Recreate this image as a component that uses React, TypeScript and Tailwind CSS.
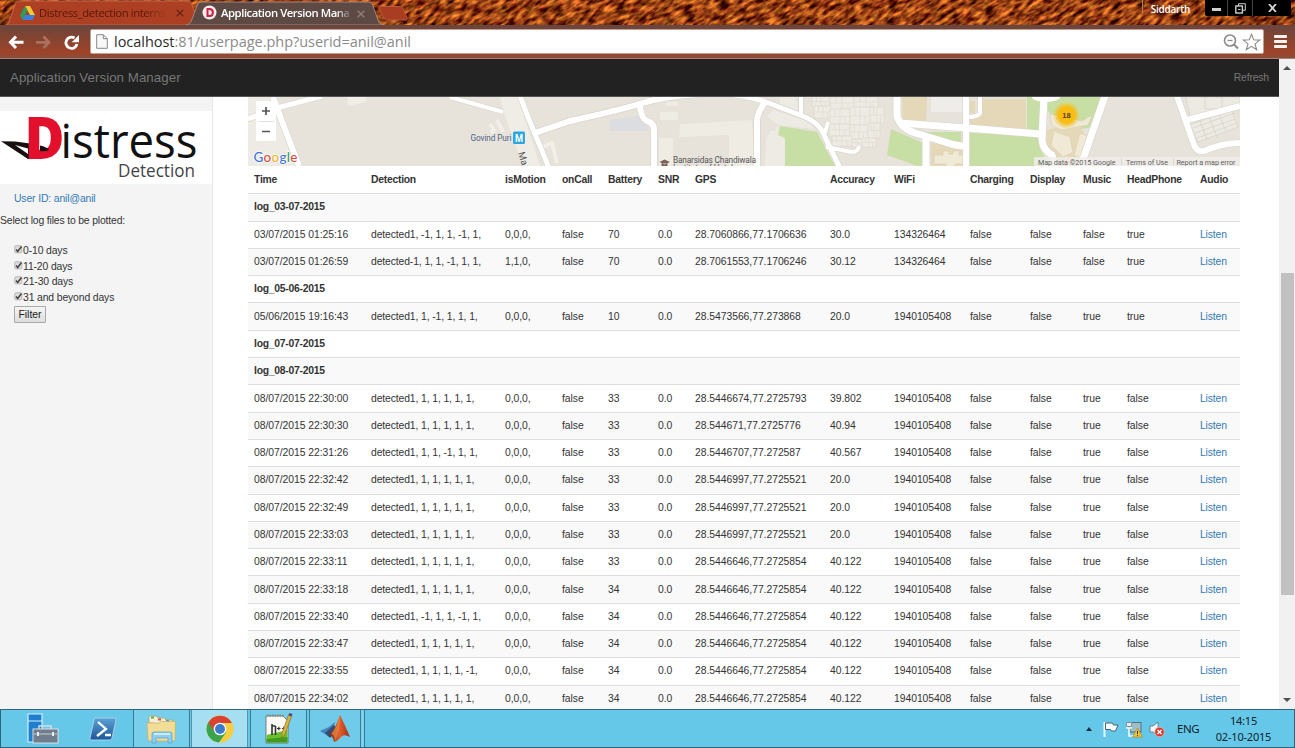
import React from "react";

const COLS =
  "grid grid-cols-[117px_134px_57px_46px_50px_37px_135px_64px_76px_60px_53px_44px_73px_40px] pl-[6px] items-center";

const HEADERS = [
  "Time", "Detection", "isMotion", "onCall", "Battery", "SNR", "GPS",
  "Accuracy", "WiFi", "Charging", "Display", "Music", "HeadPhone", "Audio",
];

type Row = string | string[];

const late = (time: string, det: string, bat: string, gps: string, acc: string): string[] => [
  `08/07/2015 ${time}`, det, "0,0,0,", "false", bat, "0.0", gps, acc,
  "1940105408", "false", "false", "true", "false",
];

const ONES = "detected1, 1, 1, 1, 1, 1,";

const ROWS: Row[] = [
  "log_03-07-2015",
  ["03/07/2015 01:25:16", "detected1, -1, 1, 1, -1, 1,", "0,0,0,", "false", "70", "0.0", "28.7060866,77.1706636", "30.0", "134326464", "false", "false", "false", "true"],
  ["03/07/2015 01:26:59", "detected-1, 1, 1, -1, 1, 1,", "1,1,0,", "false", "70", "0.0", "28.7061553,77.1706246", "30.12", "134326464", "false", "false", "false", "true"],
  "log_05-06-2015",
  ["05/06/2015 19:16:43", "detected1, 1, -1, 1, 1, 1,", "0,0,0,", "false", "10", "0.0", "28.5473566,77.273868", "20.0", "1940105408", "false", "false", "true", "true"],
  "log_07-07-2015",
  "log_08-07-2015",
  late("22:30:00", ONES, "33", "28.5446674,77.2725793", "39.802"),
  late("22:30:30", ONES, "33", "28.544671,77.2725776", "40.94"),
  late("22:31:26", "detected1, 1, 1, -1, 1, 1,", "33", "28.5446707,77.272587", "40.567"),
  late("22:32:42", ONES, "33", "28.5446997,77.2725521", "20.0"),
  late("22:32:49", ONES, "33", "28.5446997,77.2725521", "20.0"),
  late("22:33:03", ONES, "33", "28.5446997,77.2725521", "20.0"),
  late("22:33:11", ONES, "33", "28.5446646,77.2725854", "40.122"),
  late("22:33:18", ONES, "34", "28.5446646,77.2725854", "40.122"),
  late("22:33:40", "detected1, -1, 1, 1, -1, 1,", "34", "28.5446646,77.2725854", "40.122"),
  late("22:33:47", ONES, "34", "28.5446646,77.2725854", "40.122"),
  late("22:33:55", "detected1, 1, 1, 1, 1, -1,", "34", "28.5446646,77.2725854", "40.122"),
  late("22:34:02", ONES, "34", "28.5446646,77.2725854", "40.122"),
];

function Knit() {
  return (
    <svg className="absolute inset-0 h-full w-full" aria-hidden="true">
      <defs>
        <filter id="knit" x="0" y="0" width="100%" height="100%" colorInterpolationFilters="sRGB">
          <feTurbulence type="fractalNoise" baseFrequency="0.09 0.26" numOctaves="3" seed="8" />
          <feColorMatrix values="1.6 0 0 0 -0.22  1.1 0.2 0 0 -0.4  0.4 0 0 0 -0.12  0 0 0 0 1" />
        </filter>
      </defs>
      <g transform="rotate(-32 650 12)">
        <rect x="-60" y="-420" width="1420" height="860" filter="url(#knit)" />
      </g>
    </svg>
  );
}

function DriveIcon() {
  return (
    <svg width="15" height="14" viewBox="0 0 15 14">
      <path d="M5 0h5l5 9h-5z" fill="#f4c63a" />
      <path d="M5 0l2.5 4.5L2.5 14 0 9z" fill="#2f9c5a" />
      <path d="M5 9h10l-2.5 5h-10z" fill="#3c7fe0" />
    </svg>
  );
}

function TabStrip() {
  return (
    <div className="relative h-[25px] overflow-hidden bg-[#8a3a14]">
      <Knit />
      <svg className="absolute left-0 top-0" width="420" height="25" viewBox="0 0 420 25">
        <path d="M6 25c3-1 3-3 4-6l5-14c1-3 2-4 4-4h168c3 0 4 1 5 4l7 18v2z" fill="#ad3f22" stroke="#c2684c" strokeWidth="1" />
        <path d="M186 25c4-1 5-3 6-6l5-13c1-3 2-4 5-4h166c3 0 4 1 5 4l5 14c1 3 2 4 5 5z" fill="#5d4a45" stroke="#a7857b" strokeWidth="1" />
        <path d="M379 8c0-1 0-1.500 1.500-1.500h20c1.500 0 2 .5 2.500 2l4 9c.5 1.500 0 2.500-1.500 2.500h-18c-2 0-3-.5-3.500-2z" fill="#a93d22" stroke="#b9583c" strokeWidth="1" />
      </svg>
      <div className="relative flex h-full items-start pl-[20px] font-['Open_Sans',sans-serif] text-[11.5px] leading-[25px]">
        <div className="mt-[6px] w-[19px]"><DriveIcon /></div>
        <div className="w-[129px] whitespace-nowrap text-[11.300px] tracking-[-0.420px] text-[#5a160b] [mask-image:linear-gradient(90deg,#000_82%,transparent)]">Distress_detection interns</div>
        <div className="ml-[8px] mt-[9px]"><Cross color="#6f2718" /></div>
        <div className="ml-[18px] mt-[5px]">
          <svg width="15" height="15" viewBox="0 0 15 15">
            <circle cx="7.500" cy="7.500" r="7" fill="#f7ecee" />
            <path d="M5.500 4h2c4.500 0 4.500 7 0 7h-2z" fill="none" stroke="#cb2345" strokeWidth="2" />
          </svg>
        </div>
        <div className="ml-[4px] w-[131px] whitespace-nowrap text-[11.300px] font-semibold tracking-[-0.450px] text-white [mask-image:linear-gradient(90deg,#000_88%,transparent)]">Application Version Mana</div>
        <div className="ml-[5px] mt-[10px]"><Cross color="#8d7c77" /></div>
        <div className="ml-auto flex h-[16px]">
          <div className="h-[14px] border-l border-[#b77b58] pl-[8px] pr-[15px] text-[10px] font-semibold leading-[18px] tracking-[-0.250px] text-white">Siddarth</div>
          <div className="mr-[4px] flex h-[16px] w-[86px] rounded-b-[2px] bg-black">
            <div className="flex w-[23px] items-center justify-center border-r border-[#444]"><span className="mt-[3px] h-[3px] w-[9px] bg-[#d0d0d0]" /></div>
            <div className="flex w-[25px] items-center justify-center border-r border-[#444]">
              <svg width="11" height="11" viewBox="0 0 11 11" fill="none" stroke="#ccc"><path d="M3.500 3V.7h6.800v6.600H8" /><rect x=".8" y="3" width="6.600" height="7" strokeWidth="1.400" /><path d="M3 6.500h2.500" /></svg>
            </div>
            <div className="flex flex-1 items-center justify-center">
              <svg width="9" height="8" viewBox="0 0 9 8" stroke="#d8d8d8" strokeWidth="1.800"><path d="M1 0l7 8M8 0L1 8" /></svg>
            </div>
          </div>
        </div>
      </div>
    </div>
  );
}

function Cross({ color }: { color: string }) {
  return (
    <svg width="8" height="8" viewBox="0 0 8 8" stroke={color} strokeWidth="1.500"><path d="M.7.7l6.600 6.600M7.300.7L.7 7.300" /></svg>
  );
}

function Toolbar() {
  return (
    <div className="flex h-[34px] items-start border-b border-[#b9796a] bg-[linear-gradient(180deg,#66473f_0%,#7b4435_25%,#9f4328_85%,#86503f_100%)] pt-[4px]">
      <svg className="ml-[8px] mt-[5px]" width="74" height="17" viewBox="0 0 74 17" fill="none">
        <path d="M8 2.500L2.500 8.300 8 14M3 8.300h12.500" stroke="#fff" strokeWidth="3" />
        <path d="M35.500 2.500l5.500 5.800-5.500 5.700M28 8.300h12.500" stroke="#a9705c" strokeWidth="2.800" />
        <path d="M66.500 4A5.600 5.600 0 1 0 69 10" stroke="#fff" strokeWidth="2.800" />
        <path d="M71 1v7.300h-7.300z" fill="#fff" />
      </svg>
      <div className="ml-[8px] flex h-[25px] w-[1174px] items-center rounded-[2px] border border-[#c39f94] bg-white">
        <svg className="ml-[5px]" width="12" height="15" viewBox="0 0 12 15"><path d="M.7.7h6.600l4 4v9.600H.7z" fill="#f8f8f8" stroke="#888" /><path d="M7.300.7v4h4" fill="none" stroke="#888" /></svg>
        <div className="ml-[6px] whitespace-nowrap font-['Open_Sans',sans-serif] text-[14.500px] leading-[22px] tracking-[-0.030px] text-[#8a8a8a]"><span className="text-[#2a2a2a]">localhost</span>:81/userpage.php?userid=anil@anil</div>
        <svg className="ml-auto mr-[2px]" width="38" height="18" viewBox="0 0 38 18" fill="none" stroke="#8b8b8b">
          <circle cx="7" cy="7.500" r="5.500" strokeWidth="1.600" /><path d="M4.500 7.500h5" strokeWidth="1.300" /><path d="M11 11.500l4 4" strokeWidth="2.200" />
          <path d="M28.500 1.300l2.200 5.500 6 .3-4.700 3.800 1.700 5.900-5.200-3.400-5.200 3.400 1.700-5.900-4.700-3.800 6-.3z" strokeWidth="1.100" />
        </svg>
      </div>
      <div className="ml-[10px] mt-[6px] flex flex-col gap-[2px]">
        <div className="h-[3px] w-[13px] rounded-[1px] bg-[#fdf3ee]" />
        <div className="h-[3px] w-[13px] rounded-[1px] bg-[#fdf3ee]" />
        <div className="h-[3px] w-[13px] rounded-[1px] bg-[#fdf3ee]" />
      </div>
    </div>
  );
}

function Logo() {
  return (
    <svg className="mt-[14px] block bg-white" width="212" height="73" viewBox="0 111 212 73">
      <path fillRule="evenodd" d="M1 141.300l14 .2 15 2v15.500h-2zM15 145l13 9v-5.500z" fill="#17100f" />
      <text x="24.500" y="158.800" fill="#e3102d" textLength="40" lengthAdjust="spacingAndGlyphs" className="font-['Open_Sans',sans-serif] text-[59px] font-extrabold">D</text>
      <path d="M40 145.500q7 1.500 9 4.500-4 2-9 1z" fill="#17100f" />
      <text x="60.500" y="158" fill="#111" textLength="137" lengthAdjust="spacingAndGlyphs" className="font-['Open_Sans',sans-serif] text-[47px]">istress</text>
      <text x="118" y="176.500" fill="#444" textLength="77" lengthAdjust="spacingAndGlyphs" className="font-['Open_Sans',sans-serif] text-[17.500px]">Detection</text>
    </svg>
  );
}

function Sidebar() {
  const groups = ["0-10 days", "11-20 days", "21-30 days", "31 and beyond days"];
  return (
    <div className="h-full w-[213px] shrink-0 border-r border-[#e8e8e8] bg-[#f4f4f4] text-[10.400px] text-[#333]">
      <Logo />
      <div className="pl-[14px] pt-[7px] leading-[16px] tracking-[-0.130px] text-[#337ab7]">User ID: anil@anil</div>
      <div className="mt-[6px] leading-[15px] tracking-[-0.160px]">Select log files to be plotted:</div>
      <div className="mt-[15px] pl-[14px]">
        {groups.map((g) => (
          <div key={g} className="flex h-[15.600px] items-center tracking-[-0.130px]">
            <svg className="mb-[2px]" width="9" height="9" viewBox="0 0 9 9"><rect x=".8" y=".8" width="7" height="7" rx="1" fill="#ddd" stroke="#b5b5b5" /><path d="M2 4.500l1.700 2L7.500 1.500" fill="none" stroke="#444" strokeWidth="1.500" /></svg>
            <span>{g}</span>
          </div>
        ))}
        <button className="mt-[1px] flex h-[17px] w-[32px] items-center justify-center rounded-[1px] border border-[#a9a9a9] bg-[linear-gradient(#f5f5f5,#dddddd)] text-[10.400px] text-[#222]">Filter</button>
      </div>
    </div>
  );
}

const ROADS: [string, number][] = [
  ["M273 97L277 108 299 166", 6],
  ["M248 119L277 108 322 96", 5],
  ["M450 97L503 112", 4],
  ["M520 96L528 117 549 168", 5],
  ["M535 133L570 121Q620 110 643 103 665 96 700 94", 6],
  ["M640 106Q641 118 647 121 654 123 654 129V168", 6],
  ["M728 94Q752 97 766 102L800 115Q820 122 825 137L840 168", 5],
  ["M766 101Q757 112 757 122V168", 6],
  ["M801 96V114", 4],
  ["M828 122L825 133M826 147L852 152Q858 152 859 146", 4],
  ["M897 94V116Q900 128 915 133L945 142Q955 146 966 146M926 138V168", 7],
  ["M900 123L967 128 1040 134", 7],
  ["M966 96V168", 6],
  ["M980 96V113Q978 117 968 117", 4],
  ["M1044 96L1042 140Q1043 150 1052 155L1055 168", 7],
  ["M1105 96L1080 168", 7],
  ["M1177 96L1193 142Q1196 153 1204 151 1222 143 1240 143", 6],
  ["M1187 120L1240 106", 6],
];

function MapView() {
  const lots: [number, number, number, number][] = [
    [812, 97, 18, 9], [830, 97, 24, 12], [854, 97, 24, 10], [814, 106, 18, 12],
    [830, 109, 20, 15], [850, 107, 20, 18], [870, 107, 14, 16],
    [829, 124, 21, 12], [850, 125, 18, 14], [868, 123, 12, 15],
    [832, 136, 20, 10], [852, 139, 12, 8], [862, 138, 14, 9],
  ];
  return (
    <svg className="block" width="992" height="69" viewBox="248 97 992 69" fontFamily="Roboto, sans-serif">
      <rect x="248" y="97" width="992" height="69" fill="#e7e2da" />
      <path d="M248 97h25l4 11-29 11zM248 122l28-10 21 54h-49z" fill="#eeebe4" />
      <path d="M347 97h19v5l-18 4z" fill="#f1eee6" />
      <path d="M500 97h18l22 69h-17L505 116z" fill="#efede5" />
      <path d="M490 124l4 6-3 3m6-13l6 12M540 148l12-5 5 20" fill="none" stroke="#f2efe8" strokeWidth="4" />
      <path d="M610 120l34-5 5 16h-39z" fill="#dcdde0" />
      <path d="M660 112h18v8h-18zM680 124l72-4 3 46h-26v-31l-50 2zM659 138h14v28h-14zM666 102h12v4h-12z" fill="#efece4" />
      <path d="M773 110l34 11 8 8-36-4-12-8zM766 140l4-9h5l2-6 4 8 4 8v25h-20zM780 97h16l2 14-18-7z" fill="#eeebe4" />
      {lots.map(([x, y, w, h]) => (
        <g key={`${x}-${y}`} fill="#edebe4" stroke="#ddd8ce" strokeWidth=".6">
          <rect x={x} y={y} width={w} height={h} />
          <path d={`M${x + w / 4} ${y}v${h / 2}M${x + w / 2} ${y}v${h}M${x + (w * 3) / 4} ${y + h / 2}v${h / 2}M${x} ${y + h / 2}h${w}`} />
        </g>
      ))}
      <path d="M780 126l37 6 18 34h-50v-28l-7-3zM891 129l32 14v25l-36-13zM918 132h43v12zM970 133l68 3 2 13 10 17h-80zM1027 97h15l-2 34-13-1zM1048 97h55l-9 30-30 4-16-20z" fill="#c7dfa5" />
      <path d="M902 97h25l-1 27-23-3zM982 99h44v30l-56-3v-9l12-1zM970 101h5v12h-5zM931 143l33 6v17h-33zM1047 130l30-8 12 20-7 24h-23l-13-20z" fill="#e5d8b8" />
      <path d="M931 97h32v15h-32z" fill="#eeedea" />
      <path d="M934 155h9v-4h6v3h4v-3h6v4h5v9h-9v3h-9v-3h-12zM1054 131l16 6 3 15-10 5-12-12zM1080 133l7 3-7 22-6-3zM1050 114l32 7 10-6-4 10-26 5-10-4z" fill="#f0e9d5" stroke="#d9cfaf" strokeWidth=".6" />
      <path d="M1186 97h54v11l-49 13zM1190 125l41-16 7 18-40 15z" fill="#eceae2" stroke="#dad5ca" strokeWidth=".8" />
      <path d="M1193 128l42-15M1195 133l40-14M1197 138l40-15M1200 121l7 18M1209 117l8 20M1219 114l7 18M1205 97v12h17V97" fill="none" stroke="#d5d0c5" strokeWidth=".7" />
      <g fill="none" stroke="#d9d4ca" strokeLinejoin="round">
        {ROADS.map(([d, w]) => <path key={d} d={d} strokeWidth={w + 1.2} />)}
      </g>
      <g fill="none" stroke="#fff" strokeLinejoin="round">
        {ROADS.map(([d, w]) => <path key={d} d={d} strokeWidth={w} />)}
      </g>
      <ellipse cx="1046" cy="97" rx="14" ry="5" fill="#fff" />

      <rect x="256" y="101" width="20" height="40" rx="1" fill="#fff" />
      <path d="M262 111h8M266 107v8M262 131.500h8" stroke="#555" strokeWidth="1.700" />
      <path d="M258 121.500h16" stroke="#e3e3e3" />
      <text x="253.500" y="161.500" fontSize="13.500" textLength="44" stroke="#fff" strokeWidth="1.500" paintOrder="stroke" fontFamily="Lato, sans-serif" fontWeight="500">
        <tspan fill="#4274e0">G</tspan><tspan fill="#dd4b3e">o</tspan><tspan fill="#f2b52c">o</tspan><tspan fill="#4274e0">g</tspan><tspan fill="#37a055">l</tspan><tspan fill="#dd4b3e">e</tspan>
      </text>
      <text x="470.500" y="140.500" fontSize="8.200" textLength="41" fill="#4f6687">Govind Puri</text>
      <rect x="513" y="131.500" width="12" height="12.500" rx="1.500" fill="#2ba8dc" />
      <text x="515" y="141.500" fontSize="10" fontWeight="700" fill="#fff" textLength="8" lengthAdjust="spacingAndGlyphs">M</text>
      <text transform="translate(518 153) rotate(72)" fontSize="9.500" fill="#555">Ma</text>
      <path d="M659.500 162l5-2.500 5.500 2.500-5.500 2.500zM661.500 163.500v2.500h6v-2.500" fill="#7b625a" />
      <text x="673" y="162.500" fontSize="8.300" textLength="83" fill="#555">Banarsidas Chandiwala</text>
      <text x="673" y="171" fontSize="8.300" textLength="60" fill="#555">Institute of Hotel</text>
      <circle cx="1066.500" cy="115" r="13" fill="#f3c32c" opacity=".3" />
      <circle cx="1066.500" cy="115" r="11" fill="#f5c022" opacity=".6" />
      <circle cx="1066.500" cy="115" r="9" fill="#f7bd13" />
      <text x="1066.500" y="117.700" fontSize="7.500" fontWeight="700" textAnchor="middle" fill="#5a3d0b" fontFamily="Liberation Sans, sans-serif">18</text>
      <rect x="1034" y="157" width="206" height="9" fill="#f0eeea" opacity=".82" />
      <g fontSize="7.200" fill="#5f5f5f">
        <text x="1038" y="164.500" textLength="77.500">Map data ©2015 Google</text>
        <text x="1126" y="164.500" textLength="42">Terms of Use</text>
        <text x="1176.500" y="164.500" textLength="59">Report a map error</text>
      </g>
      <path d="M1121.500 158v7M1173.500 158v7" stroke="#d5d2cc" strokeWidth=".8" />
    </svg>
  );
}

function LogTable() {
  return (
    <div className="text-[10.360px] leading-[14px] text-[#333]">
      <div className={`${COLS} h-[27.300px] font-bold tracking-[-0.250px]`}>
        {HEADERS.map((h) => <div key={h} className="whitespace-nowrap">{h}</div>)}
      </div>
      {ROWS.map((row, i) => (
        <div key={i} className={`${COLS} h-[27.300px] border-t border-[#ddd] ${i % 2 === 0 ? "bg-[#f9f9f9]" : "bg-white"}`}>
          {typeof row === "string" ? (
            <div className="font-bold tracking-[-0.250px]">{row}</div>
          ) : (
            <>
              {row.map((cell, j) => <div key={j} className={j === 1 ? "whitespace-nowrap tracking-[-0.110px]" : "whitespace-nowrap tracking-[-0.040px]"}>{cell}</div>)}
              <div className="tracking-[-0.150px] text-[#337ab7]">Listen</div>
            </>
          )}
        </div>
      ))}
    </div>
  );
}

function Scrollbar() {
  return (
    <div className="flex w-[16px] shrink-0 flex-col items-center bg-[#f1f1f1]">
      <div className="mt-[7px] h-0 w-0 border-x-[4px] border-b-[4px] border-x-transparent border-b-[#505050]" />
      <div className="mt-[203px] h-[322px] w-[13px] bg-[#c1c1c1]" />
      <div className="mb-[7px] mt-auto h-0 w-0 border-x-[4px] border-t-[4px] border-x-transparent border-t-[#505050]" />
    </div>
  );
}

function ServerIcon() {
  return (
    <svg width="32" height="32" viewBox="0 0 32 32">
      <path d="M1 1h14v28H1z" fill="#1e7fce" stroke="#d9f0fa" strokeWidth="1.200" /><path d="M1 8h14" stroke="#d9f0fa" />
      <path d="M12 16v-3h12v3" fill="none" stroke="#d7dde2" strokeWidth="1.500" />
      <rect x="6" y="16" width="25" height="14" fill="#6f7d8c" stroke="#d7dde2" /><path d="M7 21h23" stroke="#c6cdd4" /><path d="M11 19v4M26 19v4" stroke="#e8ecef" strokeWidth="2" />
    </svg>
  );
}

function ShellIcon() {
  return (
    <svg width="28" height="24" viewBox="0 0 28 24">
      <defs><linearGradient id="ps" x1="0" y1="0" x2="0" y2="1"><stop stopColor="#5da2d8" /><stop offset="1" stopColor="#1d5597" /></linearGradient></defs>
      <path d="M6 1h20q1.500 0 1 2l-4 18q-.5 2-2 2H2q-1.500 0-1-2L5 3q.5-2 1-2z" fill="url(#ps)" stroke="#a9cfe8" />
      <path d="M9 5l8 7-9 7M16 18h6" fill="none" stroke="#fff" strokeWidth="2.300" />
    </svg>
  );
}

function FolderIcon() {
  return (
    <svg width="32" height="30" viewBox="0 0 32 30">
      <path d="M3 9V2h7l2 2h6l2 2h6l2 3v2z" fill="#f4efdc" stroke="#b99d4d" strokeWidth=".7" />
      <path d="M5 3.500h3" stroke="#4caf50" strokeWidth="2" /><path d="M12 5.500h3" stroke="#d95641" strokeWidth="2" /><path d="M20 7h3" stroke="#4a90d0" strokeWidth="1.800" />
      <path d="M1 9h12l2-1.500h14.500L29 25q0 2-2 2H4q-2 0-2-2z" fill="#f1dd95" stroke="#c8ad60" strokeWidth=".7" />
      <path d="M6 29V20q0-2 2-2h16q2 0 2 2v9h-4v-5H10v5z" fill="#8fcdf0" stroke="#5ba4d0" strokeWidth=".8" /><path d="M8 20h16" stroke="#e2f4fc" strokeWidth="1.500" />
    </svg>
  );
}

function ChromeIcon() {
  return (
    <svg width="28" height="28" viewBox="0 0 28 28">
      <circle cx="14" cy="14" r="13.500" fill="#f6ce3f" />
      <path d="M14 14L2.300 7.300A13.500 13.500 0 0 0 13 27.500L20 17.500z" fill="#3ba34c" />
      <path d="M2.300 7.300A13.500 13.500 0 0 1 25.900 8H14L8.500 17z" fill="#d94334" />
      <circle cx="14" cy="14" r="6.300" fill="#fff" /><circle cx="14" cy="14" r="5" fill="#3a7bcd" />
    </svg>
  );
}

function NotepadIcon() {
  return (
    <svg width="30" height="32" viewBox="0 0 30 32">
      <path d="M2 3h17l5 5v22H2z" fill="#fbfbf5" stroke="#666" strokeWidth=".8" />
      <path d="M2.500 22l21-5v12.500h-21z" fill="#6abf2c" /><path d="M2.500 26l21-2v5.500h-21z" fill="#3f9a22" />
      <path d="M3 2.500h17" stroke="#888" strokeWidth="2" strokeDasharray="1.500 1" />
      <path d="M8 11v11M11.500 13v9M8 13h3.500" stroke="#333" strokeWidth="1.600" fill="none" /><path d="M13 15.500h3.500M18 15.500h3.500M14.800 13.800v3.500M19.800 13.800v3.500" stroke="#333" strokeWidth="1.200" />
      <path d="M27.500 3.500L21 21l-3 4v-5L24.500 2z" fill="#d9b43b" stroke="#7a6425" strokeWidth=".6" /><path d="M24.500 2l1-2 3 1-1 2.500z" fill="#4b4b6f" />
    </svg>
  );
}

function MatlabIcon() {
  return (
    <svg width="30" height="28" viewBox="0 0 30 28">
      <defs><linearGradient id="ml"><stop stopColor="#7e2115" /><stop offset=".5" stopColor="#e2602a" /><stop offset="1" stopColor="#9d2e18" /></linearGradient></defs>
      <path d="M0 16l9-4 6-5-3 12-4 2z" fill="#4a7fb8" /><path d="M5 18l9-8 3 5-7 8z" fill="#2f4f78" />
      <path d="M9 20Q15 15 20 0q4 8 10 22-5-3-8-1-4 5-8 6-1-6-5-7z" fill="url(#ml)" />
      <path d="M20 0q-2 11-9 19 4 1 4 7 5-8 5-26z" fill="#ef9a4c" opacity=".55" />
    </svg>
  );
}

function Taskbar() {
  return (
    <div className="flex h-[39px] border border-[#31647a] bg-[#66c8e8] font-['Noto_Sans',sans-serif] text-[#10222c]">
      <div className="flex w-[132px] items-center pl-[26px]"><ServerIcon /><span className="ml-[30px] mt-[1px]"><ShellIcon /></span></div>
      <div className="flex w-[57px] items-center justify-center border-x border-[#397b95] bg-[#77cfeb]"><FolderIcon /></div>
      <div className="ml-[1px] flex w-[57px] items-center justify-center border-x border-[#5795ac] bg-[#a6def2]"><ChromeIcon /></div>
      <div className="ml-[2px] flex w-[57px] items-center justify-center border-x border-[#397b95] bg-[#77cfeb]"><NotepadIcon /></div>
      <div className="ml-[2px] flex w-[52px] items-center justify-center border-x border-[#397b95] bg-[#6fcbe9]"><MatlabIcon /></div>
      <div className="w-[4px] border-r border-[#397b95] bg-[#7ed1ec]" />
      <div className="ml-auto flex items-center">
        <div className="h-0 w-0 border-x-[3.500px] border-b-[4px] border-x-transparent border-b-[#12303f]" />
        <svg className="ml-[11px]" width="62" height="18" viewBox="0 0 62 18">
          <path d="M1.500 2v15" stroke="#edf8fc" strokeWidth="2" /><path d="M2.500 3h7l1 2h4.500l-2.500 6H8.500l-1-1.500h-5z" fill="#f5fcff" stroke="#40555f" strokeWidth=".9" />
          <rect x="27" y="2.500" width="11" height="9.500" fill="#9dbfc9" stroke="#56707c" /><path d="M24 2v6h4V2M26 8v8h6" fill="none" stroke="#f1f8fa" strokeWidth="1.600" /><path d="M23.500 2.500h5v4h-5z" fill="#e5eef1" stroke="#56707c" strokeWidth=".7" />
          <path d="M34.500 8l5 9h-10z" fill="#f4c22b" stroke="#a98218" strokeWidth=".6" /><path d="M34.500 11v3M34.500 15v1" stroke="#333" />
          <path d="M47 6h3l5-4v14l-5-4h-3z" fill="#f0f7fa" stroke="#56707c" strokeWidth=".8" /><circle cx="56.500" cy="12" r="4.800" fill="#d63c31" stroke="#f3c1bc" strokeWidth=".7" /><path d="M54.500 10l4 4M58.500 10l-4 4" stroke="#fff" strokeWidth="1.400" />
        </svg>
        <div className="ml-[12px] w-[24px] text-[11.500px] tracking-[-0.400px]">ENG</div>
        <div className="ml-[14px] mr-[22px] w-[57px] whitespace-nowrap text-center text-[11px] leading-[16px] tracking-[-0.200px]"><div>14:15</div><div>02-10-2015</div></div>
      </div>
    </div>
  );
}

export default function App() {
  return (
    <div className="flex h-[748px] w-[1295px] flex-col overflow-hidden bg-white font-['Liberation_Sans',Arial,sans-serif]">
      <TabStrip />
      <Toolbar />
      <div className="flex h-[650px] overflow-hidden">
        <div className="flex w-[1279px] flex-col">
          <div className="flex h-[38px] shrink-0 items-center justify-between border-b border-[#555] bg-[#222] pl-[10px] pr-[10px] text-[#777]">
            <div className="text-[13.300px] tracking-[0.050px]">Application Version Manager</div>
            <div className="text-[10.400px] tracking-[-0.150px]">Refresh</div>
          </div>
          <div className="flex h-[612px] overflow-hidden">
            <Sidebar />
            <div className="ml-[35px] w-[992px]">
              <MapView />
              <LogTable />
            </div>
          </div>
        </div>
        <Scrollbar />
      </div>
      <Taskbar />
    </div>
  );
}
